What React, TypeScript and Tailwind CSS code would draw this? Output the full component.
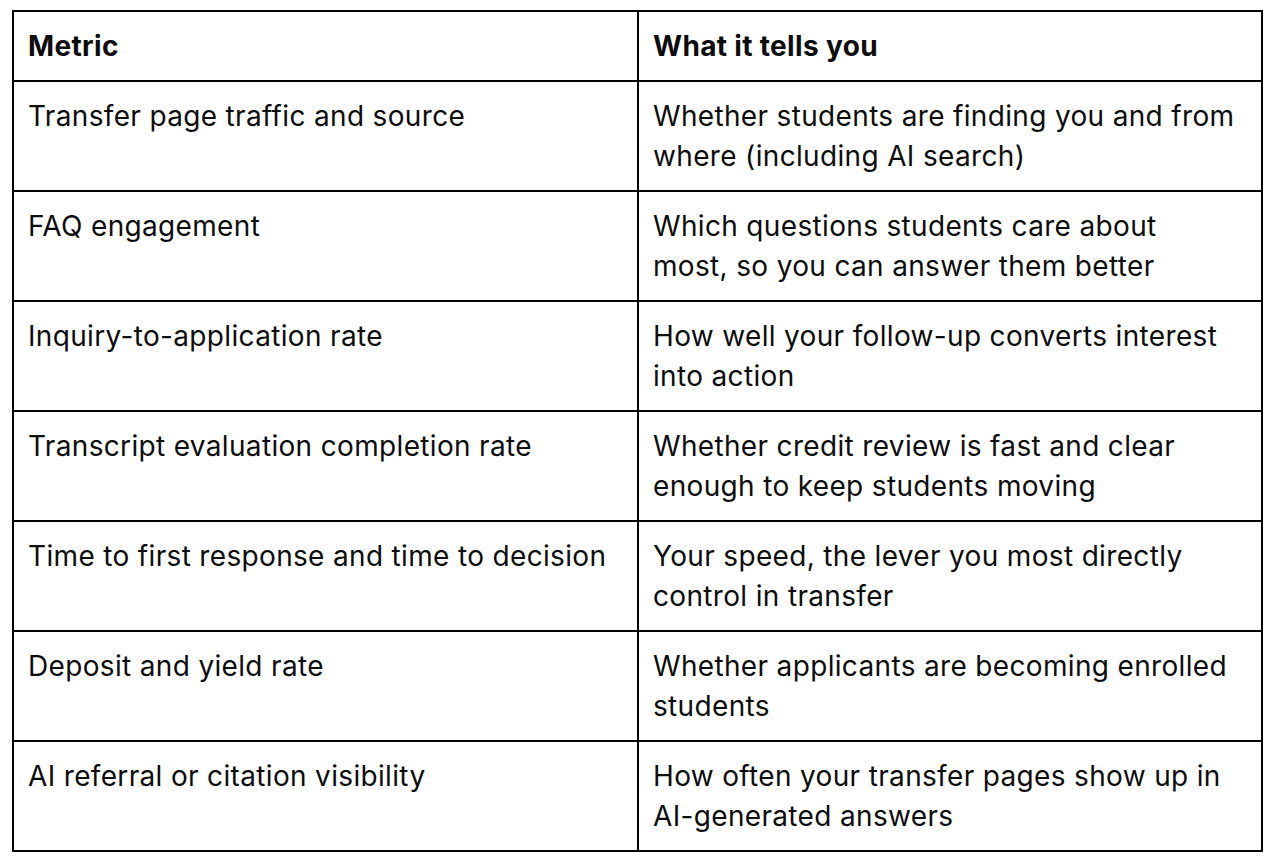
const rows: [string, string[]][] = [
  ["Transfer page traffic and source", ["Whether students are finding you and from", "where (including AI search)"]],
  ["FAQ engagement", ["Which questions students care about", "most, so you can answer them better"]],
  ["Inquiry-to-application rate", ["How well your follow-up converts interest", "into action"]],
  ["Transcript evaluation completion rate", ["Whether credit review is fast and clear", "enough to keep students moving"]],
  ["Time to first response and time to decision", ["Your speed, the lever you most directly", "control in transfer"]],
  ["Deposit and yield rate", ["Whether applicants are becoming enrolled", "students"]],
  ["AI referral or citation visibility", ["How often your transfer pages show up in", "AI-generated answers"]],
];

export default function App() {
  return (
    <div className="min-h-[862px] bg-white pl-[12px] pt-[10px] font-['Inter',sans-serif] text-[#0d0d0d]">
      <table className="w-[1251px] table-fixed border-collapse text-[28px] leading-[40px] tracking-[0.012em]">
        <colgroup>
          <col className="w-[625px]" />
          <col />
        </colgroup>
        <thead>
          <tr className="h-[70px]">
            <th className="border-2 border-black px-[14px] pt-[14px] text-left align-top font-bold">Metric</th>
            <th className="border-2 border-black px-[14px] pt-[14px] text-left align-top font-bold">What it tells you</th>
          </tr>
        </thead>
        <tbody>
          {rows.map(([metric, lines]) => (
            <tr key={metric} className="h-[110px]">
              <td className="whitespace-nowrap border-2 border-black px-[14px] pt-[14px] align-top">{metric}</td>
              <td className="whitespace-nowrap border-2 border-black px-[14px] pt-[14px] align-top">
                {lines.map((line) => (
                  <div key={line}>{line}</div>
                ))}
              </td>
            </tr>
          ))}
        </tbody>
      </table>
    </div>
  );
}
